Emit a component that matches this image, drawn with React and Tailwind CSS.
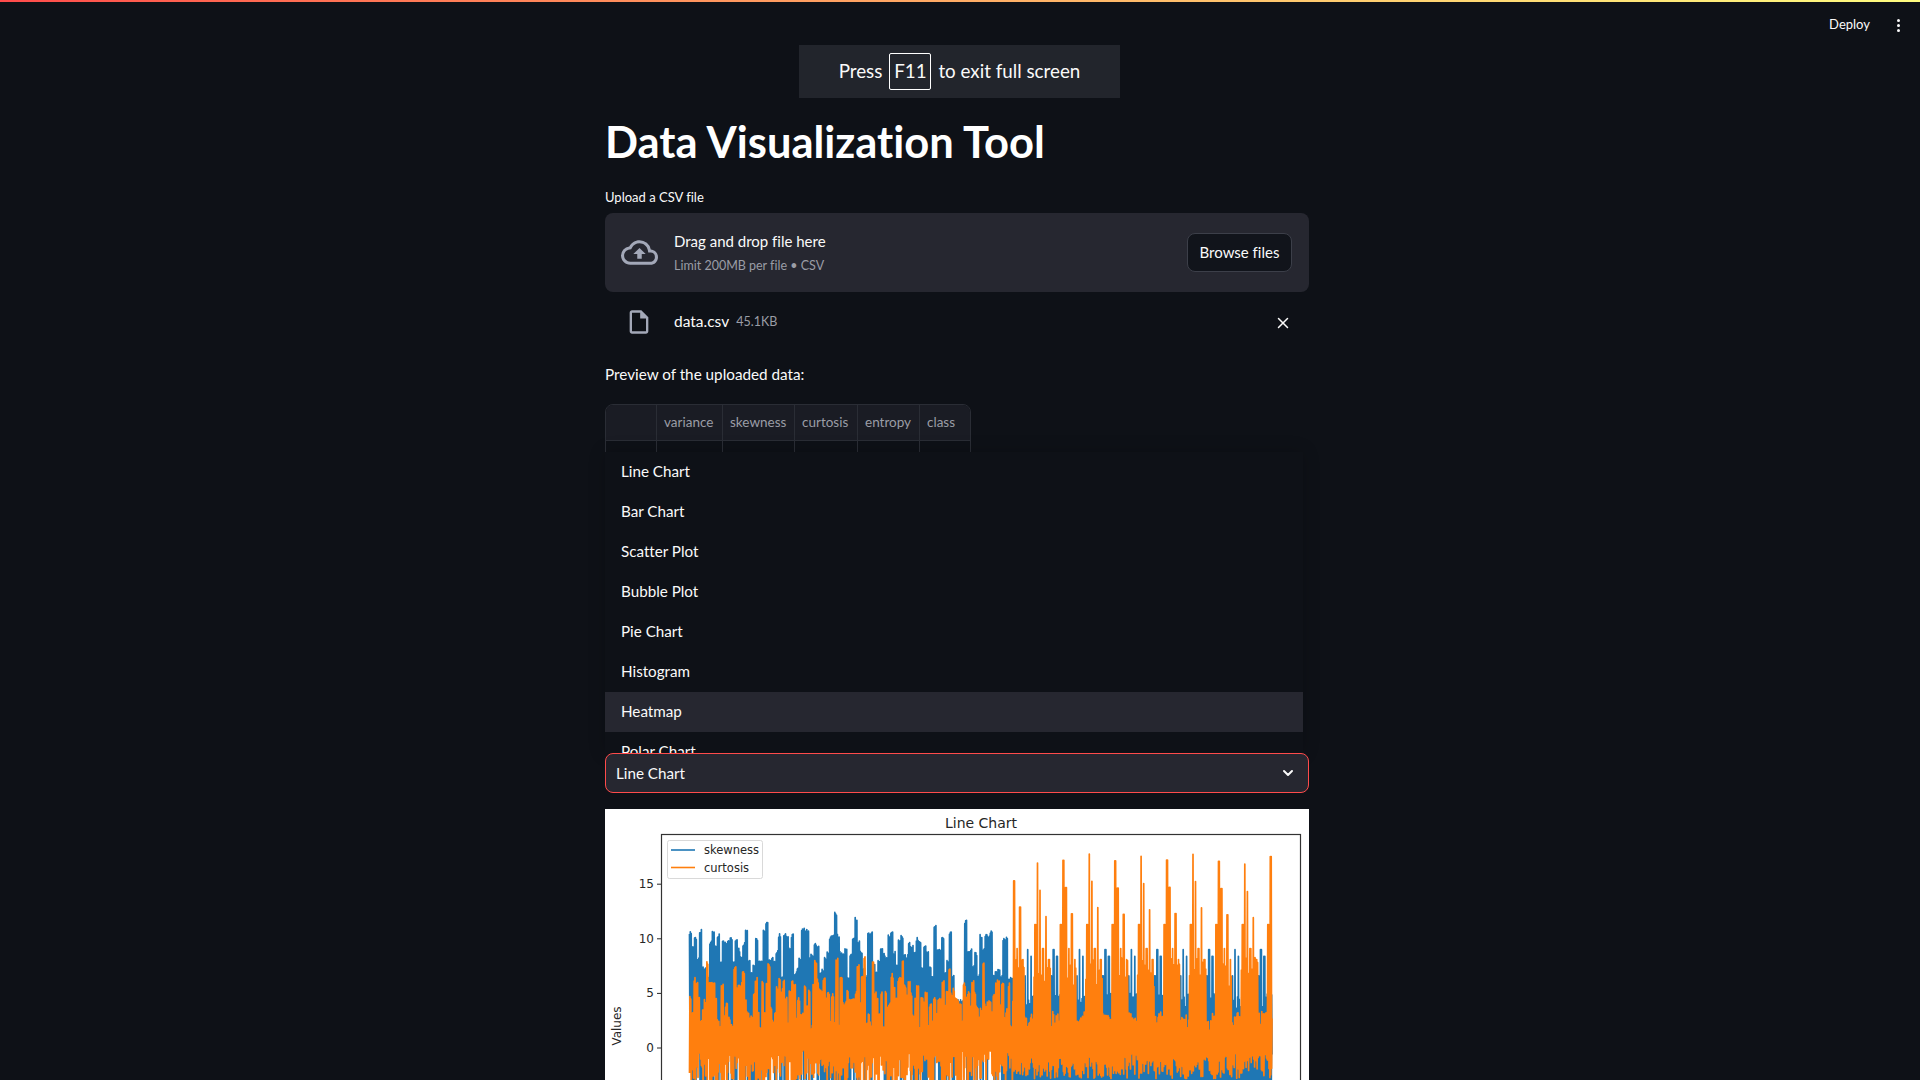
import { ChevronDown, X } from 'lucide-react'

const FONT = 'font-["Lato","Noto_Sans",sans-serif] [font-variant-ligatures:none]'

const OPTIONS = ['Line Chart', 'Bar Chart', 'Scatter Plot', 'Bubble Plot', 'Pie Chart', 'Histogram', 'Heatmap', 'Polar Chart']
const COLUMNS = [
    { name: '', width: 'w-[51px]' },
    { name: 'variance', width: 'w-[66px]' },
    { name: 'skewness', width: 'w-[72px]' },
    { name: 'curtosis', width: 'w-[63px]' },
    { name: 'entropy', width: 'w-[62px]' },
    { name: 'class', width: 'w-[51px]' },
]

// chart scale, taken from the ticks of the plot
const yOf = (v) => 239 - v * 10.92
const xOf = (i) => 84.5 + i * (582.5 / 1371)

function makeSeries() {
    let seed = 20240611
    const rand = () => {
        seed = (seed * 1664525 + 1013904223) % 4294967296
        return seed / 4294967296
    }
    const blue = []
    const orange = []
    let blueTop = 9
    let orangeTop = 6
    let peakJitter = 0
    for (let i = 0; i < 1372; i++) {
        if (i < 762) {
            // first class: noisy block, top edge changes every few samples
            if (i % 6 === 0) {
                blueTop = 6.5 + rand() * 4.5 + (rand() > 0.78 ? 1.8 : 0)
                if (i > 622 && i < 646) blueTop = 4.5
            }
            if (i % 5 === 0) orangeTop = 2 + rand() * 4.6 + (rand() > 0.75 ? 2 : 0)
            blue.push(i % 2 === 0 ? blueTop - rand() * 0.4 : (rand() > 0.6 ? -5 : rand() * 3))
            orange.push(i % 2 === 1 ? orangeTop - rand() * 0.5 : (rand() > 0.8 ? -5 : -3 + rand() * 3))
        } else {
            // second class: the same bursts come back every 61 samples
            const c = (i - 762 + 4) % 61
            if (c === 40) peakJitter = -rand() * 1
            const p = (c > 30 ? c - 61 : c) / 2.35
            let orangeEnv = 1.4 + rand() * 2
            if (p > -3.6 && p < 12.8) orangeEnv = 5.5 + rand() * 2.8
            if (p > -3.2 && p < -1.4) orangeEnv = 11.3
            if (p >= -0.8 && p < 0.8) orangeEnv = 17.8 + peakJitter
            if (p >= 2 && p < 3.2) orangeEnv = 15.3 + peakJitter
            if (p > 5 && p < 6.2) orangeEnv = 9.1
            if (p > 8 && p < 9.2) orangeEnv = 12.9 + peakJitter
            if (p > 10.8 && p < 12) orangeEnv = 8.1
            let blueEnv = 3.5 + rand() * 1.5
            if (p > -13 && p < -11.5) blueEnv = 6.6
            if (p > -10.6 && p < -9.3) blueEnv = 9
            if (p > -7.1 && p < -5.7) blueEnv = 8.4
            blue.push(i % 2 === 0 ? blueEnv : -6)
            orange.push(i % 2 === 1 ? orangeEnv : -2.8 + rand() * 2.4)
        }
    }
    orange[1371] = 2.7
    blue[1371] = -0.6
    return { blue, orange }
}

function LineChartImage() {
    const { blue, orange } = makeSeries()
    const toPoints = (list) => list.map((v, i) => `${xOf(i).toFixed(1)},${yOf(v).toFixed(1)}`).join(' ')
    const tickFont = { fontSize: 12, fill: '#262626', fontFamily: 'DejaVu Sans' }

    return (
        <svg width="704" height="271" viewBox="0 0 704 271" className="block bg-white">
            <g className="blur-[0.4px]">
                <polyline points={toPoints(blue)} fill="none" stroke="#1f77b4" strokeWidth="1.7" strokeLinejoin="round" />
                <polyline points={toPoints(orange)} fill="none" stroke="#ff7f0e" strokeWidth="1.7" strokeLinejoin="round" />
            </g>
            <text x="376" y="19" textAnchor="middle" fontSize="14" fill="#262626" fontFamily="DejaVu Sans">Line Chart</text>
            <rect x="56.5" y="25.5" width="639" height="260" fill="none" stroke="#333333" strokeWidth="1.2" />
            {[15, 10, 5, 0].map(v => (
                <g key={v}>
                    <line x1="52" x2="56" y1={yOf(v)} y2={yOf(v)} stroke="#262626" />
                    <text x="49" y={yOf(v) + 4} textAnchor="end" {...tickFont}>{v}</text>
                </g>
            ))}
            <text transform="translate(16 217) rotate(-90)" textAnchor="middle" {...tickFont}>Values</text>
            <rect x="62.5" y="31.5" width="95" height="38" rx="2" fill="#ffffff" fillOpacity="0.8" stroke="#d9d9d9" />
            <line x1="66" x2="90" y1="41" y2="41" stroke="#1f77b4" strokeWidth="1.6" />
            <line x1="66" x2="90" y1="58.5" y2="58.5" stroke="#ff7f0e" strokeWidth="1.6" />
            <text x="99" y="45" fontSize="11.5" fill="#262626" fontFamily="DejaVu Sans">skewness</text>
            <text x="99" y="62.5" fontSize="11.5" fill="#262626" fontFamily="DejaVu Sans">curtosis</text>
        </svg>
    )
}

function CloudUpload() {
    return (
        <svg width="37" height="37" viewBox="0 0 24 24" fill="#a3a8b8" className="shrink-0">
            <path d="M19.35 10.04A7.49 7.49 0 0 0 12 4C9.11 4 6.6 5.64 5.35 8.04A5.994 5.994 0 0 0 0 14c0 3.31 2.69 6 6 6h13c2.76 0 5-2.24 5-5 0-2.64-2.05-4.78-4.65-4.96zM19 18H6c-2.21 0-4-1.79-4-4 0-2.05 1.53-3.76 3.56-3.97l1.07-.11.5-.95A5.469 5.469 0 0 1 12 6c2.62 0 4.88 1.86 5.39 4.43l.3 1.5 1.53.11A2.98 2.98 0 0 1 22 15c0 1.65-1.35 3-3 3zM8 13h2.55v3h2.9v-3H16l-4-4z" />
        </svg>
    )
}

function FileIcon() {
    return (
        <svg width="28" height="28" viewBox="0 0 24 24" fill="#a3a8b8" className="shrink-0">
            <path d="M14 2H6c-1.1 0-2 .9-2 2v16c0 1.1.9 2 2 2h12c1.1 0 2-.9 2-2V8l-6-6zm4 18H6V4h7v5h5v11z" />
        </svg>
    )
}

export default function App() {
    return (
        <div className={`relative h-[1080px] overflow-hidden bg-[#0e1117] text-[#fafafa] ${FONT}`}>
            <div className="h-[2px] bg-gradient-to-r from-[#ff4b4b] to-[#fffd80]" />

            {/* top right toolbar */}
            <div className="absolute top-[3px] right-0 flex items-center h-[44px] pr-[17px] gap-[23px] text-[13px]">
                <span>Deploy</span>
                <div className="flex flex-col gap-[2px] w-[10px] items-center">
                    <span className="w-[3px] h-[3px] rounded-full bg-[#fafafa]" />
                    <span className="w-[3px] h-[3px] rounded-full bg-[#fafafa]" />
                    <span className="w-[3px] h-[3px] rounded-full bg-[#fafafa]" />
                </div>
            </div>

            {/* browser full screen notice */}
            <div className="absolute top-[45px] left-[799px] w-[321px] h-[53px] flex items-center justify-center gap-[7px] bg-[#22252c] text-[18.8px]">
                <span>Press</span>
                <span className="border border-white rounded-[2px] w-[42px] h-[37px] flex items-center justify-center">F11</span>
                <span>to exit full screen</span>
            </div>

            <main className="w-[704px] ml-[605px]">
                <h1 className="pt-[113px] h-[168px] text-[43.5px] leading-[52px] font-bold text-white">Data Visualization Tool</h1>
                <p className="mt-[18px] text-[13px] leading-[18px]">Upload a CSV file</p>

                <div className="mt-[7px] h-[79px] rounded-lg bg-[#262730] flex items-center pl-[16px] pr-[17px]">
                    <CloudUpload />
                    <div className="ml-[16px] pt-[1px] flex-1">
                        <p className="text-[15px] leading-[22px]">Drag and drop file here</p>
                        <p className="mt-[4px] text-[12.5px] leading-[20px] text-[#9a9da6]">Limit 200MB per file • CSV</p>
                    </div>
                    <button className="w-[105px] h-[39px] pb-[1px] rounded-lg border border-[#3c3f49] bg-[#11141b] text-[15px]">Browse files</button>
                </div>

                <div className="h-[60px] flex items-center pl-[20px] pr-[17px]">
                    <FileIcon />
                    <span className="ml-[21px] text-[15.5px]">data.csv</span>
                    <span className="ml-[7px] mt-[1px] text-[12.5px] text-[#9a9da6]">45.1KB</span>
                    <X size={18} className="ml-auto mt-[2px]" strokeWidth={2} />
                </div>

                <p className="mt-[11px] text-[15.25px] leading-[22px]">Preview of the uploaded data:</p>

                <div className="relative h-[405px] mt-[19px]">
                    <div className="w-[366px] h-[100px] rounded-t-lg border border-[#2a2d35] flex flex-col overflow-hidden">
                        <div className="flex h-[36px] bg-[#1a1c24] border-b border-[#2a2d35]">
                            {COLUMNS.map(c => (
                                <div key={c.name} className={`${c.width} shrink-0 border-r last:border-r-0 border-[#2a2d35] pl-[7px] text-[13.5px] leading-[35px] text-[#9a9da6]`}>{c.name}</div>
                            ))}
                        </div>
                        <div className="flex flex-1">
                            {COLUMNS.map(c => (
                                <div key={c.name} className={`${c.width} shrink-0 border-r last:border-r-0 border-[#2a2d35]`} />
                            ))}
                        </div>
                    </div>

                    {/* open dropdown list */}
                    <div className="absolute top-[48px] left-0 w-[698px] h-[301px] overflow-hidden bg-[#0e1117] shadow-[0_0_16px_rgba(0,0,0,0.2)]">
                        {OPTIONS.map(o => (
                            <div key={o} className={`h-[40px] pl-[16px] pb-[1px] flex items-center text-[15.2px] ${o === 'Heatmap' ? 'bg-[#262730]' : ''}`}>{o}</div>
                        ))}
                    </div>

                    <div className="absolute top-[349px] left-0 w-full h-[40px] rounded-lg border border-[#ff4b4b] bg-[#262730] flex items-center pl-[10px] pr-[12px] text-[15.2px]">
                        <span>Line Chart</span>
                        <ChevronDown size={16} strokeWidth={3} className="ml-auto" />
                    </div>
                </div>

                <LineChartImage />
            </main>
        </div>
    )
}
